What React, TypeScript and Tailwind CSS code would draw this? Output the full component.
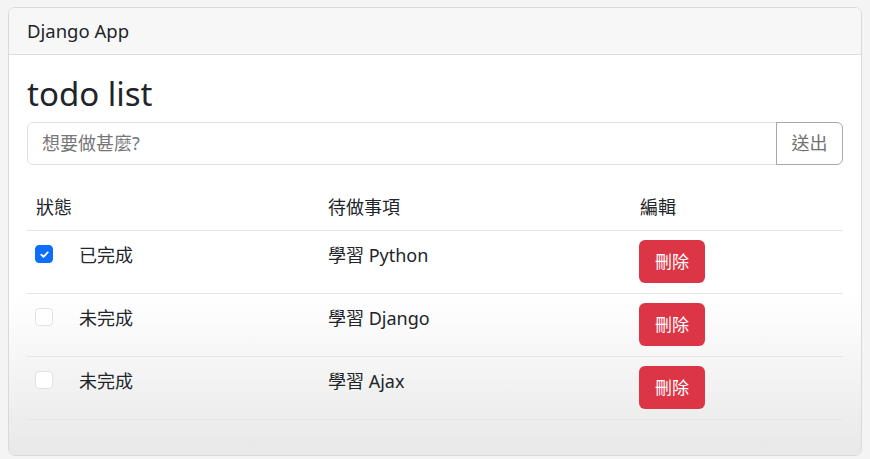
import React from 'react';

interface Todo {
  id: number;
  done: boolean;
  title: string;
}

const todos: Todo[] = [
  { id: 1, done: true, title: '學習 Python' },
  { id: 2, done: false, title: '學習 Django' },
  { id: 3, done: false, title: '學習 Ajax' },
];

const App: React.FC = () => {
  const [items, setItems] = React.useState<Todo[]>(todos);

  const toggle = (id: number) => {
    setItems(prev => prev.map(t => (t.id === id ? { ...t, done: !t.done } : t)));
  };

  return (
    <div className="min-h-screen bg-[#f4f4f4] pt-[7px] pl-[8px] font-['Noto_Sans','Noto_Sans_CJK_TC',sans-serif] text-[#212529]">
      <div className="w-[854px] h-[449px] border border-[#d9d9d9] rounded-[7px] overflow-hidden flex flex-col bg-white">
        {/* Header */}
        <div className="h-[47px] shrink-0 bg-[#f7f7f7] border-b border-[#dcdcdc] px-[18px] flex items-center text-[18.5px]">
          Django App
        </div>

        {/* Body */}
        <div className="flex-1 px-[18px] bg-linear-to-b from-white from-[60%] to-[#e8e8e8]">
          <h2 className="mt-[18px] text-[33px] leading-[42px] font-normal">todo list</h2>

          <div className="mt-[7px] flex h-[43px]">
            <input
              className="flex-1 min-w-0 border border-[#e0e0e0] rounded-l-[6px] px-[14px] text-[18px] outline-none placeholder:text-[#777]"
              placeholder="想要做甚麼?"
            />
            <button className="w-[67px] border border-[#a8a8a8] rounded-r-[6px] -ml-px text-[18px] text-[#707070]">
              送出
            </button>
          </div>

          {/* Table */}
          <div className="mt-[19px] text-[18px]">
            <div className="grid grid-cols-[293px_312px_1fr] h-[47px] items-center border-b border-[#e6e6e6]">
              <div className="pl-[9px]">狀態</div>
              <div className="pl-[8px]">待做事項</div>
              <div className="pl-[8px]">編輯</div>
            </div>
            {items.map(item => (
              <div
                key={item.id}
                className="grid grid-cols-[293px_312px_1fr] h-[63px] border-b border-[#e6e6e6]"
              >
                <div className="pl-[8px] pt-[12px] flex items-start">
                  <button
                    onClick={() => toggle(item.id)}
                    className={`mt-[2px] w-[18px] h-[18px] rounded-[4px] flex items-center justify-center ${
                      item.done ? 'bg-[#0d6efd] border border-[#0d6efd]' : 'border border-[#e2e2e2] bg-white'
                    }`}
                  >
                    {item.done && (
                      <svg width="11" height="11" viewBox="0 0 12 12" fill="none">
                        <path d="M2.5 6.2l2.4 2.4 4.6-4.9" stroke="white" strokeWidth="2" strokeLinecap="round" strokeLinejoin="round" />
                      </svg>
                    )}
                  </button>
                  <span className="ml-[26px] leading-[24px]">{item.done ? '已完成' : '未完成'}</span>
                </div>
                <div className="pl-[8px] pt-[12px] leading-[24px]">{item.title}</div>
                <div className="pl-[7px] pt-[9px]">
                  <button className="w-[66px] h-[43px] rounded-[6px] bg-[#dc3545] text-white text-[17px]">
                    刪除
                  </button>
                </div>
              </div>
            ))}
          </div>
        </div>
      </div>
    </div>
  );
};

export default App;
